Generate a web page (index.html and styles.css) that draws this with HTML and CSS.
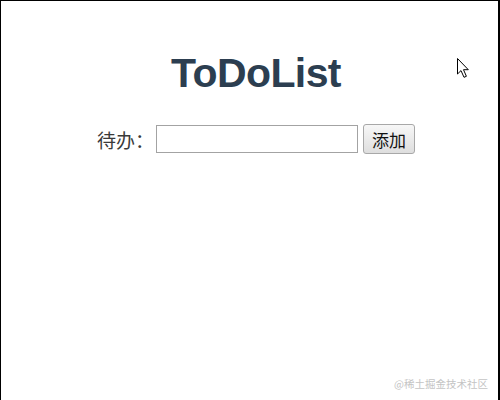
FILE: index.html
```html
<!DOCTYPE html>
<html lang="zh">
<head>
<meta charset="utf-8">
<title>ToDoList</title>
<link rel="stylesheet" href="styles.css">
</head>
<body>
<div class="frame">
  <div class="app">
    <h1 class="title">ToDoList</h1>
    <div class="row">
      <label class="label" for="todo">待办：</label>
      <input id="todo" class="field" type="text">
      <button class="add" type="button">添加</button>
    </div>
  </div>
  <svg class="cursor" width="14" height="22" viewBox="0 0 14 22">
    <path d="M1.5 1.5 L1.5 17 L5 13.6 L8 20.3 L10.4 19.3 L7.5 12.7 L12.3 12.7 Z" fill="#fff" stroke="#000" stroke-width="1" stroke-linejoin="miter"/>
  </svg>
  <div class="mark">@稀土掘金技术社区</div>
</div>
</body>
</html>
```
FILE: styles.css
```css
html, body {
  margin: 0;
  padding: 0;
  background: #fff;
}
.frame {
  position: relative;
  width: 500px;
  height: 400px;
  box-sizing: border-box;
  border-top: 1px solid #000;
  border-left: 1px solid #000;
  border-right: 2px solid #000;
  overflow: hidden;
  font-family: "Liberation Sans", "Noto Sans CJK SC", sans-serif;
}
.app {
  padding-top: 49px;
  padding-left: 13px;
  text-align: center;
  color: #2c3e50;
}
.title {
  margin: 0;
  font-size: 41px;
  line-height: 46px;
  font-weight: bold;
  letter-spacing: -0.6px;
  color: #2c3e50;
}
.row {
  margin-top: 28px;
  display: flex;
  justify-content: center;
  align-items: center;
}
.label {
  font-family: "Noto Sans CJK SC", sans-serif;
  font-size: 19px;
  color: #3a3a3a;
  margin-right: 2px;
}
.field {
  width: 202px;
  height: 28px;
  box-sizing: border-box;
  border: 1px solid #a3a3a3;
  padding: 0 4px;
  margin: 0;
  background: #fff;
}
.add {
  margin-left: 5px;
  width: 52px;
  height: 30px;
  box-sizing: border-box;
  padding: 0;
  border: 1px solid #a8a8a8;
  border-radius: 3px;
  background: linear-gradient(#f7f7f7, #dedede);
  font-family: "Noto Sans CJK SC", sans-serif;
  font-size: 17px;
  color: #111;
}
.cursor {
  position: absolute;
  left: 455px;
  top: 56px;
}
.mark {
  position: absolute;
  right: 10px;
  bottom: 9px;
  font-family: "Noto Sans CJK SC", sans-serif;
  font-size: 10.5px;
  color: #c4c4c4;
}
```
